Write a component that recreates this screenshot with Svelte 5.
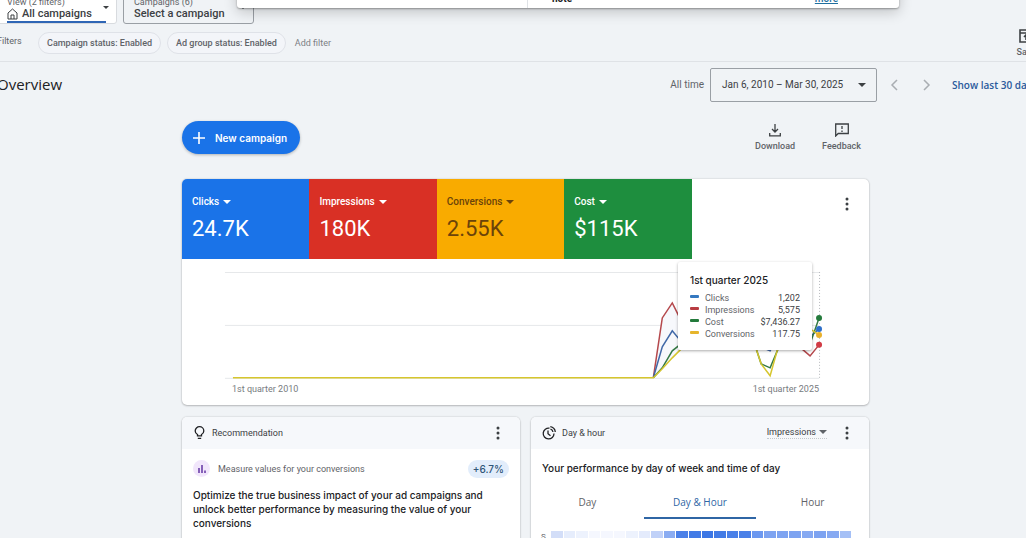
<script>
    const metrics = [
        { name: 'Clicks', value: '24.7K', tone: 'blue' },
        { name: 'Impressions', value: '180K', tone: 'red' },
        { name: 'Conversions', value: '2.55K', tone: 'yellow' },
        { name: 'Cost', value: '$115K', tone: 'green' }
    ]

    const quarter = [
        { name: 'Clicks', value: '1,202', color: '#3478c0' },
        { name: 'Impressions', value: '5,575', color: '#b83c42' },
        { name: 'Cost', value: '$7,436.27', color: '#237a3b' },
        { name: 'Conversions', value: '117.75', color: '#e6b52c' }
    ]

    const lines = [
        { color: '#b5484c', points: '471,119 480,59 490,44 500,64 520,80 560,70 600,78 612,84 621,91 628,97 637,86' },
        { color: '#4068a8', points: '471,119 480,88 490,72 500,84 520,76 560,80 588,92 600,70 620,85 637,70' },
        { color: '#357a45', points: '471,119 480,109 490,92 500,84 520,70 560,60 574,90 579,105 588,109 596,90 610,60 628,85 637,59' },
        { color: '#d6c62e', points: '50,119 471,119 480,110 490,99 500,89 520,70 560,60 574,90 579,105 588,117 595,92 610,60 628,70 637,76' }
    ]

    const ends = [
        { y: 59, color: '#237a3b' },
        { y: 70, color: '#2d6fc9' },
        { y: 76, color: '#e9b02c' },
        { y: 86, color: '#d23b45' }
    ]

    const hours = [
        '#d3def8', '#e6edfc', '#edf2fd', '#f5f7fe', '#f5f7fe', '#f5f7fe', '#edf2fd', '#e4ebfc',
        '#c0d1f8', '#8aacf2', '#4a80e8', '#427be6', '#3b76e5', '#427be6', '#4a80e8', '#4a80e8',
        '#6c98f0', '#7da3f1', '#7da3f1', '#7da3f1', '#86a9f2', '#7da3f1', '#86a9f2', '#a5c0f6'
    ]

    const tabs = ['Day', 'Day & Hour', 'Hour']
    let tab = 'Day & Hour'
    let breakdown = 'Impressions'
</script>

{#snippet more(label)}
    <button class="more" aria-label={label}>
        <svg width="4" height="14" viewBox="0 0 4 14">
            <circle cx="2" cy="2" r="1.5" />
            <circle cx="2" cy="7" r="1.5" />
            <circle cx="2" cy="12" r="1.5" />
        </svg>
    </button>
{/snippet}

<div class="page">
    <header>
        <div class="scopes">
            <button class="scope view">
                <span class="hint">View (2 filters)</span>
                <span class="choice">
                    <svg width="11" height="12" viewBox="0 0 11 12" fill="none" stroke="#3c4043">
                        <path d="M1 5 5.5 1 10 5v6H1z" />
                        <path d="M4 11V7h3v4" />
                    </svg>
                    All campaigns
                </span>
                <i class="caret"></i>
            </button>
            <button class="scope pick">
                <span class="hint">Campaigns (6)</span>
                <span class="choice">Select a campaign</span>
                <i class="caret"></i>
            </button>
        </div>
        <div class="filters">
            <span class="filters-title">Filters</span>
            <button class="chip">Campaign status: Enabled</button>
            <button class="chip">Ad group status: Enabled</button>
            <button class="add">Add filter</button>
            <button class="tool save">
                <svg width="14" height="14" viewBox="0 0 14 14" fill="none" stroke="#3c4043" stroke-width="1.6">
                    <path d="M1 1h12v12H1zM1 4h12" />
                    <path d="M7 6v5M5 8l2-2 2 2" />
                </svg>
                Save
            </button>
        </div>
    </header>

    <div class="dialog" role="dialog" aria-label="Notice">
        <div class="dialog-main"></div>
        <div class="dialog-side">
            <b>note</b>
            <a href="#more">more</a>
        </div>
    </div>

    <div class="title-row">
        <h1>Overview</h1>
        <span class="all-time">All time</span>
        <button class="dates">Jan 6, 2010 – Mar 30, 2025 <i class="caret"></i></button>
        <button class="step" aria-label="Previous period">
            <svg width="8" height="12" viewBox="0 0 8 12"><path d="M7 1 2 6l5 5" /></svg>
        </button>
        <button class="step" aria-label="Next period">
            <svg width="8" height="12" viewBox="0 0 8 12"><path d="M1 1l5 5-5 5" /></svg>
        </button>
        <a class="last" href="#last-30">Show last 30 days</a>
    </div>

    <main>
        <div class="actions">
            <button class="new">
                <svg width="12" height="12" viewBox="0 0 12 12" stroke="#fff" stroke-width="1.6">
                    <path d="M6 0v12M0 6h12" />
                </svg>
                New campaign
            </button>
            <button class="tool">
                <svg width="14" height="14" viewBox="0 0 14 14" fill="none" stroke="#3c4043" stroke-width="1.3">
                    <path d="M7 1v8M4 6l3 3 3-3M1.7 10v2.8h10.6V10" />
                </svg>
                Download
            </button>
            <button class="tool">
                <svg width="16" height="14" viewBox="0 0 16 14" fill="none" stroke="#3c4043" stroke-width="1.3">
                    <path d="M1.7 13V1h12.6v9.5H4.2z" />
                    <path d="M8 3v3M8 7.5v1.5" />
                </svg>
                Feedback
            </button>
        </div>

        <section class="card">
            <div class="metrics">
                {#each metrics as m}
                    <button class="metric {m.tone}">
                        <span class="metric-name">{m.name} <i class="caret"></i></span>
                        <span class="metric-value">{m.value}</span>
                    </button>
                {/each}
                <div class="metrics-end">{@render more('Chart options')}</div>
            </div>
            <svg class="chart" viewBox="-1 0 688 124" fill="none">
                <path d="M42 13.5H637M42 66.5H637M42 119.5H637" stroke="#e6e8ea" />
                <path d="M637.5 13V119" stroke="#b5b8bc" stroke-dasharray="1 2" />
                <path d="M471 119 480 59 490 44 500 64V89L490 99 480 110z" fill="#f7f8fc" />
                {#each lines as line}
                    <polyline points={line.points} stroke={line.color} stroke-width="1.5" />
                {/each}
                {#each ends as end}
                    <circle cx="637" cy={end.y} r="3" fill={end.color} />
                {/each}
            </svg>
            <div class="axis">
                <span>1st quarter 2010</span>
                <span>1st quarter 2025</span>
            </div>
            <div class="tooltip">
                <h3>1st quarter 2025</h3>
                <table>
                    <tbody>
                        {#each quarter as q}
                            <tr>
                                <th scope="row"><i class="dash" style="background: {q.color}"></i>{q.name}</th>
                                <td>{q.value}</td>
                            </tr>
                        {/each}
                    </tbody>
                </table>
            </div>
        </section>

        <div class="cards">
            <section class="card">
                <div class="card-head">
                    <svg width="13" height="14" viewBox="0 0 12 14" fill="none" stroke="#202124" stroke-width="1.3">
                        <path d="M4 9.8V8.5C2.5 7.7 1.7 6.5 1.7 5a4.3 4.3 0 0 1 8.6 0c0 1.5-.8 2.7-2.3 3.5v1.3zM4.3 12.3h3.4" />
                    </svg>
                    <h2>Recommendation</h2>
                    {@render more('Recommendation options')}
                </div>
                <div class="card-body">
                    <div class="advice">
                        <span class="advice-icon">
                            <svg width="8" height="8" viewBox="0 0 8 8" stroke="#6b3fa8" stroke-width="1.6">
                                <path d="M1 8V3M4 8V0M7 8V5.5" />
                            </svg>
                        </span>
                        <span>Measure values for your conversions</span>
                        <span class="score">+6.7%</span>
                    </div>
                    <p class="lead">Optimize the true business impact of your ad campaigns and unlock better performance by measuring the value of your conversions</p>
                </div>
            </section>

            <section class="card">
                <div class="card-head">
                    <svg width="14" height="14" viewBox="0 0 14 14" fill="none" stroke="#202124" stroke-width="1.3">
                        <path d="M7.5 2.2A5.4 5.4 0 1 0 12 7.5M6 4.5v3.3l2.5 2M8.3.7a6 6 0 0 1 5 5.3M8.5 3.2A3.5 3.5 0 0 1 11 6" />
                    </svg>
                    <h2>Day &amp; hour</h2>
                    <label class="breakdown">
                        <select aria-label="Metric" bind:value={breakdown}>
                            <option>Impressions</option>
                            <option>Clicks</option>
                        </select>
                        <i class="caret"></i>
                    </label>
                    {@render more('Day and hour options')}
                </div>
                <p class="question">Your performance by day of week and time of day</p>
                <div class="tabs" role="tablist">
                    {#each tabs as t}
                        <button role="tab" aria-selected={t === tab} class:active={t === tab} onclick={() => (tab = t)}>{t}</button>
                    {/each}
                </div>
                <div class="heat">
                    <span class="day">S</span>
                    {#each hours as h}
                        <span class="cell" style="background: {h}"></span>
                    {/each}
                </div>
            </section>
        </div>
    </main>
</div>

<style>
    :global(body) {
        background: #f0f3f6;
    }

    .page {
        position: relative;
        height: 100vh;
        overflow: hidden;
        font: 9px/12px Roboto, sans-serif;
        color: #5f6368;
    }

    button {
        font: inherit;
        color: inherit;
        border: 0;
        background: none;
        padding: 0;
        cursor: pointer;
        white-space: nowrap;
    }

    svg {
        display: block;
        flex: none;
    }

    h1, h2, h3, p {
        margin: 0;
        font-weight: 400;
    }

    .caret {
        display: inline-block;
        border: 4px solid transparent;
        border-top-color: currentColor;
        border-bottom: 0;
    }

    header {
        border-bottom: 1px solid #dfe2e6;
    }

    .scopes {
        display: flex;
        gap: 6px;
        margin: -14px 0 0 -4px;
    }

    .scope {
        position: relative;
        box-sizing: border-box;
        display: flex;
        flex-direction: column;
        height: 38px;
        text-align: left;
        padding: 9px 10px 0;
        border: 1px solid #c4c8cc;
        border-radius: 3px;
    }

    .view {
        width: 121px;
        background: #fff;
        border-color: #d8dbdf;
    }

    .view::after {
        content: '';
        position: absolute;
        left: 10px;
        right: 10px;
        bottom: 0;
        height: 2px;
        background: #2f66b5;
    }

    .pick {
        width: 131px;
        border-color: #9a9fa5;
    }

    .hint {
        line-height: 12px;
    }

    .choice {
        display: flex;
        align-items: center;
        gap: 4px;
        font: 500 11px/12px Roboto, sans-serif;
        color: #3c4043;
    }

    .scope .caret {
        position: absolute;
        right: 7px;
        top: 19px;
        border-width: 3px;
        border-bottom: 0;
        color: #3c4043;
    }

    .filters {
        display: flex;
        align-items: center;
        height: 37px;
    }

    .filters-title {
        width: 41px;
        margin-left: -3px;
        line-height: 16px;
        padding-bottom: 4px;
    }

    .chip {
        height: 22px;
        padding: 0 8px;
        margin-right: 6px;
        border: 1px solid #dfe2e8;
        border-radius: 12px;
        font-weight: 500;
        background: #f3f5f9;
    }

    .add {
        margin-left: 3px;
        color: #7c8085;
    }

    .tool {
        display: flex;
        flex-direction: column;
        align-items: center;
        gap: 3px;
        font-weight: 500;
    }

    .save {
        margin: 0 -10px 0 auto;
        padding-top: 2px;
    }

    .dialog {
        position: absolute;
        top: -24px;
        left: 237px;
        right: 127px;
        height: 32px;
        display: flex;
        background: #fff;
        border-radius: 3px;
        box-shadow: 0 1px 2px #0005, 0 4px 14px #0003;
    }

    .dialog-main {
        flex: 0 0 290px;
        border-right: 1px solid #dfe2e6;
    }

    .dialog-side {
        flex: 1;
        display: flex;
        align-items: flex-end;
        justify-content: space-between;
        padding: 0 61px 3px 24px;
        font-size: 10px;
        color: #202124;
    }

    .dialog a {
        font-weight: 500;
        color: #1f6f9f;
    }

    .title-row {
        display: flex;
        align-items: center;
        height: 45px;
        white-space: nowrap;
    }

    h1 {
        margin-left: -3px;
        padding-bottom: 2px;
        font: 15px/20px "Open Sans", sans-serif;
        color: #202124;
    }

    .all-time {
        margin: 0 6px 0 auto;
        font-size: 10px;
    }

    .dates {
        box-sizing: border-box;
        display: flex;
        align-items: center;
        justify-content: space-between;
        width: 167px;
        height: 34px;
        padding: 0 10px 0 11px;
        border: 1px solid #9a9fa5;
        border-radius: 2px;
        font-size: 10px;
        color: #3c4043;
    }

    .step {
        width: 33px;
        display: flex;
        justify-content: center;
    }

    .step path {
        fill: none;
        stroke: #a9adb2;
        stroke-width: 1.5;
    }

    .last {
        margin: 0 -11px 0 9px;
        font: 600 10px/14px "Open Sans", sans-serif;
        color: #2a5a9c;
        text-decoration: none;
    }

    main {
        padding: 14px 157px 0 182px;
    }

    .actions {
        display: flex;
        align-items: center;
        gap: 27px;
        padding-right: 8px;
        margin-bottom: 25px;
    }

    .new {
        display: flex;
        align-items: center;
        gap: 10px;
        height: 33px;
        padding: 0 13px 0 11px;
        margin-right: auto;
        border-radius: 17px;
        font: 600 10px/14px Inter, sans-serif;
        color: #fff;
        background: #1a73e8;
        box-shadow: 0 1px 3px #0004;
    }

    .card {
        position: relative;
        background: #fff;
        border-radius: 5px;
        box-shadow: 0 0 2px #0003, 0 1px 2px #0003;
    }

    .metrics {
        display: grid;
        grid-template-columns: repeat(4, 51fr) 71fr;
        height: 80px;
        border-radius: 5px 5px 0 0;
        overflow: hidden;
    }

    .metric {
        display: flex;
        flex-direction: column;
        justify-content: center;
        gap: 8px;
        padding: 0 10px;
        text-align: left;
        color: #fff;
    }

    .metric-name {
        display: flex;
        align-items: center;
        gap: 4px;
        font: 500 10px/12px Roboto, sans-serif;
    }

    .metric-value {
        font: 22px/26px Roboto, sans-serif;
    }

    .blue {
        background: #1a73e8;
    }

    .red {
        background: #d93025;
    }

    .yellow {
        background: #f9ab00;
        color: #6b430a;
    }

    .green {
        background: #1e8e3e;
    }

    .more {
        display: flex;
        justify-content: center;
        width: 12px;
        height: 14px;
        fill: #3c4043;
    }

    .metrics-end {
        display: flex;
        justify-content: flex-end;
        padding: 18px 16px 0 0;
    }

    .chart {
        width: 100%;
    }

    .axis {
        display: flex;
        justify-content: space-between;
        padding: 0 50px 10px;
        color: #777b80;
    }

    .tooltip {
        position: absolute;
        top: 83px;
        right: 57px;
        box-sizing: border-box;
        width: 134px;
        padding: 11px 12px 10px;
        background: #fff;
        border-radius: 2px;
        box-shadow: 0 1px 3px #0005;
    }

    h3 {
        margin-bottom: 5px;
        font: 500 10px/14px Inter, sans-serif;
        color: #202124;
    }

    table {
        width: 100%;
        border-collapse: collapse;
    }

    th, td {
        padding: 0;
        font-weight: 400;
        text-align: left;
        line-height: 12px;
    }

    td {
        text-align: right;
        color: #3c4043;
    }

    .dash {
        display: inline-block;
        width: 9px;
        height: 3px;
        margin-right: 6px;
        border-radius: 1px;
        vertical-align: 3px;
    }

    .cards {
        display: grid;
        grid-template-columns: 1fr 1fr;
        gap: 11px;
        margin-top: 12px;
    }

    .card-head {
        display: flex;
        align-items: center;
        gap: 6px;
        height: 32px;
        padding: 0 16px 0 11px;
        border-radius: 5px 5px 0 0;
        background: #f6f8fb;
    }

    .card-head .more {
        margin-left: auto;
    }

    h2 {
        font: 9px/12px Roboto, sans-serif;
        color: #3c4043;
    }

    .card-body {
        padding: 11px;
    }

    .advice {
        display: flex;
        align-items: center;
        gap: 8px;
    }

    .advice-icon {
        display: flex;
        align-items: center;
        justify-content: center;
        width: 17px;
        height: 17px;
        border-radius: 50%;
        background: #f1e6fb;
    }

    .score {
        margin-left: auto;
        padding: 3px 5px;
        border-radius: 10px;
        font: 500 10px/12px Inter, sans-serif;
        color: #2f5578;
        background: #e2edfb;
    }

    .lead, .question {
        font: 500 10px/14px Inter, sans-serif;
        color: #202124;
    }

    .lead {
        margin-top: 10px;
        padding-right: 24px;
    }

    .breakdown {
        display: flex;
        align-items: center;
        gap: 3px;
        margin-left: auto;
        border-bottom: 1px dotted #c4c8cc;
    }

    .card-head .breakdown + .more {
        margin-left: 8px;
    }

    select {
        appearance: none;
        border: 0;
        padding: 0;
        font: 9px/12px Roboto, sans-serif;
        color: #3c4043;
        background: none;
        field-sizing: content;
    }

    .question {
        padding: 12px 11px;
    }

    .tabs {
        display: grid;
        grid-template-columns: repeat(3, 1fr);
    }

    .tabs button {
        height: 32px;
        border-bottom: 2px solid transparent;
        font: 500 10px/30px "Open Sans", sans-serif;
    }

    .tabs .active {
        color: #2f66a5;
        border-color: #2f66a5;
    }

    .heat {
        display: flex;
        gap: 1px;
        padding: 12px 18px 0 10px;
    }

    .day {
        width: 9px;
        font-size: 8px;
    }

    .cell {
        flex: 1;
        height: 16px;
    }
</style>
